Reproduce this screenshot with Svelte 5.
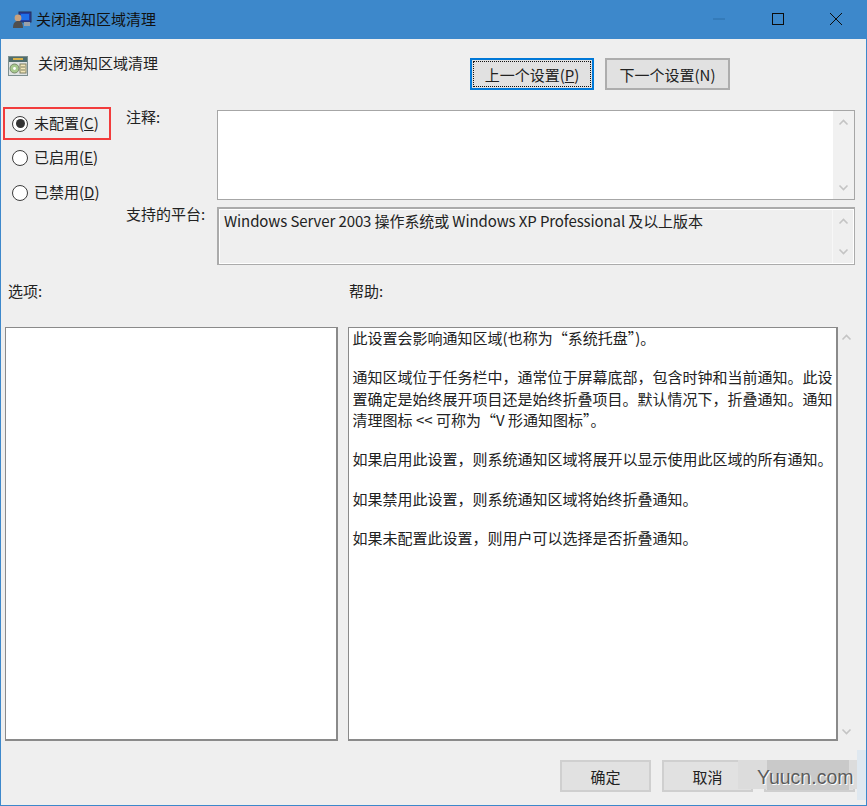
<script>
  const options = [
    { label: '未配置', key: 'C', checked: true },
    { label: '已启用', key: 'E', checked: false },
    { label: '已禁用', key: 'D', checked: false }
  ];
</script>

<div class="window">
  <header class="titlebar">
    <svg class="app-icon" width="20" height="20" viewBox="0 0 20 20">
      <rect x="7" y="2" width="12" height="10" fill="#1f3fa8" stroke="#2a2f55" />
      <rect x="9" y="4" width="8" height="6" fill="#1f6fe8" />
      <rect x="12" y="12" width="6" height="4" fill="#9aa0aa" />
      <circle cx="6" cy="8" r="3.4" fill="#c9a27e" />
      <path d="M1 18c0-5 2-7 5-7s5 2 5 7z" fill="#4f4f4f" />
    </svg>
    <span class="title">关闭通知区域清理</span>
    <div class="controls">
      <svg width="16" height="16" viewBox="0 0 16 16"><path d="M2 8h12" stroke="#2d6fa8" stroke-width="1" /></svg>
      <svg width="16" height="16" viewBox="0 0 16 16"><rect x="2.5" y="2.5" width="11" height="11" fill="none" stroke="#0c0c0c" stroke-width="1" /></svg>
      <svg width="16" height="16" viewBox="0 0 16 16"><path d="M2 2l12 12M14 2L2 14" stroke="#0c0c0c" stroke-width="1" /></svg>
    </div>
  </header>

  <div class="content">
    <div class="head">
      <div class="policy">
        <svg width="20" height="20" viewBox="0 0 20 20">
          <rect x="0.5" y="0.5" width="19" height="19" fill="#dfe3e3" stroke="#7d8f8f" />
          <rect x="1" y="1" width="18" height="5" fill="#4f6d6d" />
          <rect x="5" y="2" width="10" height="2" fill="#d9b24a" />
          <circle cx="6.5" cy="12.5" r="4.5" fill="#a7c98e" stroke="#7a8a6a" />
          <circle cx="6.5" cy="12.5" r="1.4" fill="#fff" />
          <rect x="12" y="8" width="6" height="9" fill="#f2e6b8" stroke="#7f7f60" />
          <path d="M13 11h4M13 14h4" stroke="#7f7f60" />
        </svg>
        <span>关闭通知区域清理</span>
      </div>
      <div class="nav">
        <button class="btn prev focused"><span class="focus-ring">上一个设置(<u>P</u>)</span></button>
        <button class="btn">下一个设置(N)</button>
      </div>
    </div>

    <div class="config">
      <div class="radios">
        {#each options as o}
          <label class="radio" class:selected={o.checked}>
            <span class="dot" class:on={o.checked}></span>
            <span class="radio-text">{o.label}(<u>{o.key}</u>)</span>
          </label>
        {/each}
      </div>
      <div class="fields">
        <div class="field notes">
          <span class="field-label">注释:</span>
          <div class="box white">
            <div class="scroll pale">
              <svg class="chev" width="11" height="7" viewBox="0 0 11 7"><path d="M1.5 5.5l4-4 4 4" /></svg>
              <svg class="chev" width="11" height="7" viewBox="0 0 11 7"><path d="M1.5 1.5l4 4 4-4" /></svg>
            </div>
          </div>
        </div>
        <div class="field platform">
          <span class="field-label">支持的平台:</span>
          <div class="box readonly">
            <span class="platform-text">Windows Server 2003 操作系统或 Windows XP Professional 及以上版本</span>
            <div class="scroll">
              <svg class="chev" width="11" height="7" viewBox="0 0 11 7"><path d="M1.5 5.5l4-4 4 4" /></svg>
              <svg class="chev" width="11" height="7" viewBox="0 0 11 7"><path d="M1.5 1.5l4 4 4-4" /></svg>
            </div>
          </div>
        </div>
      </div>
    </div>

    <div class="labels">
      <span class="options-label">选项:</span>
      <span>帮助:</span>
    </div>

    <div class="panes">
      <div class="pane options"></div>
      <div class="pane help">
        <p>此设置会影响通知区域(也称为“系统托盘”)。</p>
        <p>通知区域位于任务栏中，通常位于屏幕底部，包含时钟和当前通知。此设<br />置确定是始终展开项目还是始终折叠项目。默认情况下，折叠通知。通知<br />清理图标 &lt;&lt; 可称为“V 形通知图标”。</p>
        <p>如果启用此设置，则系统通知区域将展开以显示使用此区域的所有通知。</p>
        <p>如果禁用此设置，则系统通知区域将始终折叠通知。</p>
        <p>如果未配置此设置，则用户可以选择是否折叠通知。</p>
      </div>
      <div class="help-scroll">
        <svg class="chev" width="11" height="7" viewBox="0 0 11 7"><path d="M1.5 5.5l4-4 4 4" /></svg>
        <svg class="chev" width="11" height="7" viewBox="0 0 11 7"><path d="M1.5 1.5l4 4 4-4" /></svg>
      </div>
    </div>

    <footer class="footer">
      <button class="btn action">确定</button>
      <button class="btn action">取消</button>
      <button class="btn action"></button>
    </footer>
  </div>

  <div class="mark-edge"></div>
  <div class="mark-soft"></div>
  <div class="mark">Yuucn.com</div>
</div>

<style>
  :global(body) {
    margin: 0;
    background: #efefef;
  }
  .window {
    position: relative;
    width: 867px;
    height: 806px;
    box-sizing: border-box;
    background: #efefef;
    border: 1px solid #3d88cb;
    border-top: 0;
    overflow: hidden;
    font-family: "Noto Sans CJK SC", "Noto Sans", sans-serif;
    font-size: 15px;
    color: #222;
    display: flex;
    flex-direction: column;
  }
  .titlebar {
    flex: none;
    height: 39px;
    margin: 0 -1px;
    padding-left: 12px;
    background: #3d88cb;
    display: flex;
    align-items: center;
    color: #111;
  }
  .app-icon {
    flex: none;
  }
  .title {
    margin: -2px 0 0 4px;
  }
  .controls {
    margin-left: auto;
    width: 156px;
    padding-right: 23px;
    box-sizing: border-box;
    display: flex;
    justify-content: space-between;
    align-items: center;
    margin-top: -1px;
  }
  .content {
    flex: 1;
    min-height: 0;
    display: flex;
    flex-direction: column;
    padding: 0 11px 0 4px;
  }
  .head {
    flex: none;
    height: 34px;
    padding: 19px 125px 0 0;
    display: flex;
    justify-content: space-between;
    align-items: flex-start;
  }
  .policy {
    margin-top: -2px;
    display: flex;
    align-items: flex-start;
    gap: 10px;
    padding-left: 3px;
    line-height: 14px;
  }
  .nav {
    display: flex;
    gap: 11px;
  }
  .btn {
    box-sizing: border-box;
    width: 125px;
    height: 32px;
    padding: 0;
    background: #e1e1e1;
    border: 2px solid #adadad;
    font: inherit;
    color: #222;
  }
  .btn.prev {
    width: 124px;
  }
  .btn.focused {
    border-color: #0078d7;
    padding: 1px;
  }
  .focus-ring {
    display: flex;
    height: 100%;
    align-items: center;
    justify-content: center;
    outline: 1px dotted #111;
    outline-offset: -1px;
  }
  .config {
    flex: none;
    display: flex;
    margin-top: 15px;
    height: 165px;
  }
  .radios {
    flex: none;
    width: 121px;
    display: flex;
    flex-direction: column;
    gap: 3px;
  }
  .radio {
    box-sizing: border-box;
    height: 32px;
    width: 108px;
    margin-left: -2px;
    padding-left: 7px;
    display: flex;
    align-items: center;
    gap: 6px;
    border: 2px solid transparent;
  }
  .radio-text {
    margin-top: -4px;
  }
  .radio.selected {
    height: 33px;
    margin-bottom: -1px;
    border-color: #f23c3c;
  }
  .radio.selected .radio-text {
    margin-top: -2px;
  }
  .dot {
    box-sizing: border-box;
    width: 16px;
    height: 16px;
    border: 1.5px solid #3c3c3c;
    border-radius: 50%;
    background: #fff;
    position: relative;
  }
  .dot.on::after {
    content: "";
    position: absolute;
    inset: 2.5px;
    border-radius: 50%;
    background: #333;
  }
  .fields {
    flex: 1;
    display: flex;
    flex-direction: column;
    gap: 7px;
    margin-top: 3px;
  }
  .field {
    display: flex;
  }
  .field-label {
    flex: none;
    width: 91px;
    margin-top: -1px;
    line-height: 15px;
  }
  .notes {
    height: 90px;
  }
  .platform {
    height: 58px;
  }
  .box {
    flex: 1;
    box-sizing: border-box;
    border: 1px solid #a6a6a6;
    display: flex;
    justify-content: space-between;
  }
  .white {
    background: #fff;
    justify-content: flex-end;
  }
  .readonly {
    background: #efefef;
    border-width: 2px 1px 1px 2px;
    border-color: #ababab;
    box-shadow: inset 1px 1px 0 #fff, inset -1px -1px 0 #fff;
  }
  .platform-text {
    padding: 1px 0 0 5px;
    line-height: 21px;
    letter-spacing: -0.1px;
    white-space: nowrap;
  }
  .scroll {
    flex: none;
    width: 21px;
    margin: 1px;
    display: flex;
    flex-direction: column;
    align-items: center;
    justify-content: space-between;
    padding: 8px 0;
    box-sizing: border-box;
    border-left: 1px solid #f7f7f7;
  }
  .pale {
    background: #f1f1f1;
    border-left: 0;
    margin: 0;
  }
  .chev {
    flex: none;
  }
  .chev path {
    fill: none;
    stroke: #c4c4c4;
    stroke-width: 1.6;
  }
  .labels {
    flex: none;
    display: flex;
    margin-top: 11px;
    height: 15px;
    line-height: 15px;
  }
  .options-label {
    width: 344px;
    padding-left: 3px;
    box-sizing: border-box;
  }
  .panes {
    flex: none;
    display: flex;
    margin-top: 29px;
    height: 414px;
  }
  .pane {
    box-sizing: border-box;
    background: #fff;
    border: 1px solid #8a8a8a;
    border-width: 1px 2px 2px 1px;
  }
  .options {
    width: 333px;
  }
  .help {
    width: 491px;
    margin-left: 10px;
    padding: 0 0 0 4px;
    line-height: 21.5px;
    white-space: nowrap;
  }
  .help p {
    margin: -1px 0 18.7px;
  }
  .help-scroll {
    flex: none;
    width: 17px;
    display: flex;
    flex-direction: column;
    align-items: center;
    justify-content: space-between;
    padding: 7px 0 6px;
    box-sizing: border-box;
  }
  .footer {
    flex: none;
    margin-top: 19px;
    display: flex;
    gap: 11px;
    padding-left: 555px;
  }
  .action {
    width: 91px;
    height: 32px;
    border-color: #cfcfcf;
    background: #e1e1e1;
  }
  .mark-edge {
    position: absolute;
    left: 856px;
    top: 750px;
    width: 10px;
    height: 50px;
    background: #dfe8f0;
  }
  .mark-soft {
    position: absolute;
    left: 737px;
    top: 760px;
    width: 119px;
    height: 29px;
    background: #dcdcdc;
  }
  .mark {
    position: absolute;
    left: 755px;
    top: 760px;
    width: 92px;
    height: 30px;
    padding-left: 1px;
    background: linear-gradient(90deg, transparent 11px, #c9c9c9 11px);
    font-family: "Liberation Sans", sans-serif;
    font-size: 19.5px;
    line-height: 34px;
    color: #5c5c5c;
    text-shadow: 1px 1px 0 #fff;
    white-space: nowrap;
  }
</style>
